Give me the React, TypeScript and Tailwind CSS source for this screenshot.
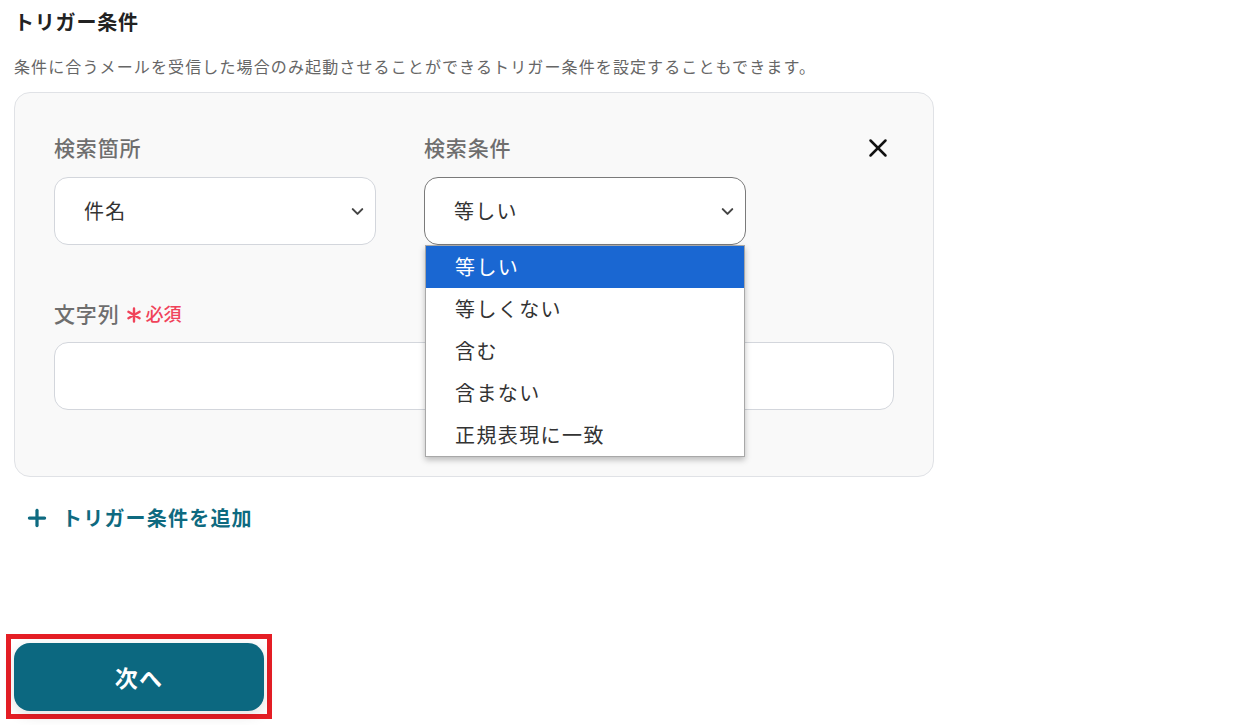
import { ChevronDown, Plus, X } from "lucide-react";

const font = { fontFamily: '"Noto Sans CJK JP", "Noto Sans", sans-serif' };

const options = ["等しい", "等しくない", "含む", "含まない", "正規表現に一致"];

function SelectBox({ value, focused, children }: { value: string; focused?: boolean; children?: React.ReactNode }) {
  return (
    <div className="relative">
      <div
        className={
          "flex h-[68px] items-center justify-between rounded-[14px] border bg-white pl-[29px] pr-[8px] " +
          (focused ? "border-[#7a7a7a]" : "border-[#d3d6dc]")
        }
      >
        <span className="text-[20px] tracking-[0.06em] text-[#333]">{value}</span>
        <ChevronDown className="h-[19px] w-[19px] text-[#444]" strokeWidth={2.6} />
      </div>
      {children}
    </div>
  );
}

export default function App() {
  return (
    <div className="min-h-[725px] w-[1242px] bg-white px-[14px] pt-[7px]" style={font}>
      <h2 className="text-[20px] font-bold leading-[30px] tracking-[0.04em] text-[#222]">トリガー条件</h2>
      <p className="mt-[17px] text-[16px] leading-[24px] tracking-[0.07em] text-[#666]">
        条件に合うメールを受信した場合のみ起動させることができるトリガー条件を設定することもできます。
      </p>

      <div className="mt-[14px] w-[920px] rounded-[16px] border border-[#e0e2e6] bg-[#f9f9f9] px-[39px] pb-[66px] pt-[39px]">
        <div className="flex items-start">
          <div className="w-[322px]">
            <div className="text-[21px] font-medium leading-[30px] tracking-[0.04em] text-[#6e6e6e]">検索箇所</div>
            <div className="mt-[15px]">
              <SelectBox value="件名" />
            </div>
          </div>
          <div className="ml-[48px] w-[322px]">
            <div className="text-[21px] font-medium leading-[30px] tracking-[0.04em] text-[#6e6e6e]">検索条件</div>
            <div className="mt-[15px]">
              <SelectBox value="等しい" focused>
                <ul className="absolute left-[1px] top-[68px] z-10 w-[320px] border border-[#a8a8a8] bg-white shadow-[0_3px_6px_rgba(0,0,0,0.25)]">
                  {options.map((o, i) => (
                    <li
                      key={o}
                      className={
                        "flex h-[42px] items-center pl-[29px] text-[20px] tracking-[0.07em] " +
                        (i === 0 ? "bg-[#1a67d2] text-white" : "text-[#333]")
                      }
                    >
                      {o}
                    </li>
                  ))}
                </ul>
              </SelectBox>
            </div>
          </div>
          <div className="ml-auto mr-[1px] mt-[1px]">
            <X className="h-[30px] w-[30px] text-[#111]" strokeWidth={2} />
          </div>
        </div>

        <div className="mt-[53px] flex items-center leading-[30px]">
          <span className="text-[21px] font-medium tracking-[0.04em] text-[#6e6e6e]">文字列</span>
          <svg className="ml-[6px] mt-[4px] h-[16px] w-[16px] text-[#f0435a]" viewBox="0 0 16 16" fill="none" stroke="currentColor" strokeWidth="2.4" strokeLinecap="round">
            <path d="M8 1.5v13M2.4 4.75l11.2 6.5M13.6 4.75l-11.2 6.5" />
          </svg>
          <span className="ml-[4px] text-[18px] font-medium text-[#f0435a]">必須</span>
        </div>
        <div className="mt-[14px] h-[68px] rounded-[14px] border border-[#d3d6dc] bg-white" />
      </div>

      <div className="ml-[10px] mt-[26px] flex items-center gap-[12px] text-[#0e6a80]">
        <Plus className="h-[26px] w-[26px]" strokeWidth={3} />
        <span className="text-[20px] font-bold leading-[30px] tracking-[0.06em]">トリガー条件を追加</span>
      </div>

      <div className="ml-[-8px] mt-[101px] inline-block border-[5px] border-[#e51e25] px-[3px] pb-[3px] pt-[4px]">
        <button className="flex h-[68px] w-[250px] items-center justify-center rounded-[16px] bg-[#0c6880] text-[23px] font-bold tracking-[0.05em] text-white shadow-[0_4px_14px_rgba(0,0,0,0.12)]">
          次へ
        </button>
      </div>
    </div>
  );
}
